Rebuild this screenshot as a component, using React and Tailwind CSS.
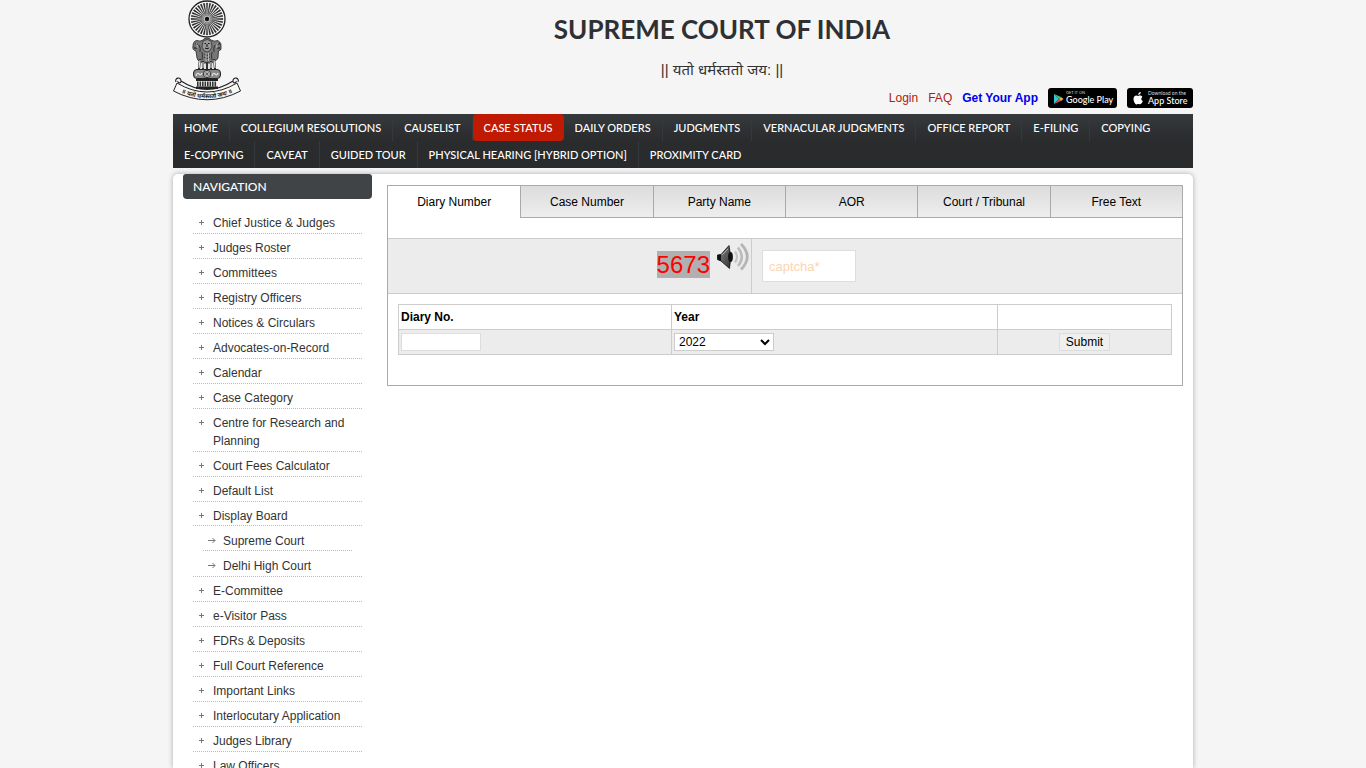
import React, { useState } from 'react';

const menuRows = [
  ['HOME', 'COLLEGIUM RESOLUTIONS', 'CAUSELIST', 'CASE STATUS', 'DAILY ORDERS', 'JUDGMENTS', 'VERNACULAR JUDGMENTS', 'OFFICE REPORT', 'E-FILING', 'COPYING'],
  ['E-COPYING', 'CAVEAT', 'GUIDED TOUR', 'PHYSICAL HEARING [HYBRID OPTION]', 'PROXIMITY CARD'],
];

const sideLinks = [
  { label: 'Chief Justice & Judges' },
  { label: 'Judges Roster' },
  { label: 'Committees' },
  { label: 'Registry Officers' },
  { label: 'Notices & Circulars' },
  { label: 'Advocates-on-Record' },
  { label: 'Calendar' },
  { label: 'Case Category' },
  { label: 'Centre for Research and Planning' },
  { label: 'Court Fees Calculator' },
  { label: 'Default List' },
  { label: 'Display Board', children: ['Supreme Court', 'Delhi High Court'] },
  { label: 'E-Committee' },
  { label: 'e-Visitor Pass' },
  { label: 'FDRs & Deposits' },
  { label: 'Full Court Reference' },
  { label: 'Important Links' },
  { label: 'Interlocutary Application' },
  { label: 'Judges Library' },
  { label: 'Law Officers' },
];

const tabs = ['Diary Number', 'Case Number', 'Party Name', 'AOR', 'Court / Tribunal', 'Free Text'];

const Emblem = () => {
  const spokes = Array.from({ length: 32 }, (_, i) => i * 11.25);

  return (
    <svg viewBox="0 0 68 101" className="w-[68px] h-[101px] shrink-0" role="img" aria-label="Emblem">
      {/* wheel */}
      <circle cx="34" cy="19" r="18" fill="#fff" stroke="#222" strokeWidth="1.300" />
      {spokes.map((deg) => (
        <path key={deg} d="M34 14.5 L33.300 3 H34.700 Z" fill="#222" stroke="#222" strokeWidth="0.4" transform={`rotate(${deg} 34 19)`} />
      ))}
      <circle cx="34" cy="19" r="4" fill="#bbb" stroke="#555" strokeWidth="0.6" />
      <circle cx="34" cy="19" r="2.2" fill="#111" />
      <path d="M32 37 h4 l1 3 h-6z" fill="#999" />

      {/* lions */}
      <path d="M30 40 Q34 35.500 38 40 Q41 42 45 40.500 Q49 43 48 47 Q49 50 45.500 51 L45 58 Q43 62 41 60 L39 63 H29 L27 60 Q25 62 24 58 L23 51 Q19 50 20 46 Q20 41 24 40.500 Q27 42 30 40Z" fill="#777" stroke="#222" strokeWidth="0.8" />
      <path d="M30 41 Q34 38 38 41 L39 47 Q37 52 34 52 Q31 52 29 47Z" fill="#999" stroke="#333" strokeWidth="0.8" />
      <path d="M31.500 43.500 h1.500 M35 43.500 h1.500 M34 44 v3 M32 48 q2 1.500 4 0 M22 43.500 l3 1 M44 44.500 l3 -1 M21 48 h3 M44 48 h3" stroke="#111" strokeWidth="1" fill="none" />
      <path d="M26 45 q2 3 1 7 M42 45 q-2 3 -1 7 M29 52 q1 4 0 8 M39 52 q-1 4 0 8 M31 54 q3 3 6 0 M31 57 q3 3 6 0" stroke="#333" strokeWidth="1" fill="none" />
      <path d="M23 43 q2 2 1 5 M45 43 q-2 2 -1 5 M33 53 v8 M35.500 53 v8" stroke="#ddd" strokeWidth="0.7" fill="none" />
      {/* legs */}
      <path d="M27 59 L26 69 M30 61 L30 69 M34 62 V69 M38 61 L38 69 M41 59 L42 69" stroke="#333" strokeWidth="2.2" />
      <path d="M27 60 L26 68 M30 62 V68 M38 62 V68 M41 60 L42 68" stroke="#eee" strokeWidth="1" />

      {/* abacus */}
      <rect x="20.500" y="69.500" width="27" height="9" rx="3.500" fill="#888" stroke="#222" strokeWidth="1" />
      <circle cx="34" cy="74" r="3.600" fill="#ddd" stroke="#222" strokeWidth="0.9" />
      <path d="M34 71 v6 M31 74 h6 M32 72 l4 4 M36 72 l-4 4" stroke="#333" strokeWidth="0.5" />
      <path d="M23 76 q1 -4 3 -2 t3 -1 M39 76 q1 -4 3 -2 t3 -1" stroke="#ddd" strokeWidth="1.300" fill="none" />

      {/* base */}
      <path d="M23 79 H45 V81 H23Z M23 86.500 H45 V89 H23Z" fill="#222" />
      <path d="M24 84 H44" stroke="#333" strokeWidth="5" strokeDasharray="1.600 0.900" />

      {/* ribbon */}
      <path d="M3 82 C1 78 8 76 8 81 C8 84 4 83 5 81 M8 81 Q34 98 60 81 M65 82 C67 78 60 76 60 81 C60 84 64 83 63 81" fill="none" stroke="#222" strokeWidth="1.100" />
      <path d="M4 83 Q34 101 64 83 L67.500 91 Q34 108.500 0.500 91 Z" fill="#f8f8f8" stroke="#222" strokeWidth="1" />
      <path id="ribbonLine" d="M3 90 Q34 106.500 65 90" fill="none" />
      <text fontSize="6" fontWeight="700" fill="#222" fontFamily="Noto Sans, sans-serif" textAnchor="middle">
        <textPath href="#ribbonLine" startOffset="50%">॥ यतो धर्मस्ततो जयः ॥</textPath>
      </text>
    </svg>
  );
};

const PlayBadge = () => (
  <svg viewBox="0 0 69 20" className="w-[69px] h-5" role="img" aria-label="Get it on Google Play">
    <rect width="69" height="20" rx="3" fill="#000" />
    <path d="M6 6 V16 L11 11Z" fill="#35c5d6" />
    <path d="M6 6 L11 11 L13 9Z" fill="#35c77a" />
    <path d="M6 16 L11 11 L13 13Z" fill="#e4405a" />
    <path d="M11 11 L13 9 L15.500 11 L13 13Z" fill="#e9b440" />
    <text x="18" y="6" fontSize="4" fill="#ccc" fontFamily="Lato, sans-serif">GET IT ON</text>
    <text x="18" y="15" fontSize="9" fontWeight="500" fill="#fff" fontFamily="Lato, sans-serif">Google Play</text>
  </svg>
);

const AppleBadge = () => (
  <svg viewBox="0 0 66 20" className="w-[66px] h-5" role="img" aria-label="Download on the App Store">
    <rect width="66" height="20" rx="3" fill="#000" />
    <path d="M13.800 4 C12.200 4.200 11.100 5.400 11.200 6.900 C12.800 6.800 13.900 5.500 13.800 4Z M11.200 8 C9.800 7.300 8.800 7.200 7.700 8 C6.200 9.200 6.200 12 7.300 14.200 C8.300 16.200 9.300 16.700 10.200 16.200 C11 15.800 11.600 15.800 12.400 16.200 C13.800 16.800 15.200 14.700 15.800 13 C14 12.200 13.700 9.900 15.400 8.900 C14.300 7.400 12.700 7.300 11.200 8Z" fill="#fff" />
    <text x="21" y="7" fontSize="5" fill="#ddd" fontFamily="Lato, sans-serif">Download on the</text>
    <text x="21" y="16" fontSize="9" fontWeight="500" fill="#fff" fontFamily="Lato, sans-serif">App Store</text>
  </svg>
);

const Speaker = () => (
  <svg viewBox="0 0 34 32" className="w-[34px] h-8">
    <defs>
      <linearGradient id="cone" x1="0" y1="0" x2="1" y2="1">
        <stop offset="0" stopColor="#888" />
        <stop offset="1" stopColor="#333" />
      </linearGradient>
    </defs>
    <path d="M1.500 12 L5 11.500 L13 2.500 Q16 14 13.500 25.500 L5 18 L1.500 16.500Z" fill="url(#cone)" stroke="#111" strokeWidth="0.8" />
    <path d="M1.500 12 L5 11.500 V18 L1.500 16.500Z" fill="#111" />
    <ellipse cx="14.500" cy="14" rx="2.400" ry="5" fill="#111" />
    <path d="M6 12 L12 6" stroke="#aaa" strokeWidth="1" />
    <path d="M19 8.500 Q23 14 19 19.500" fill="none" stroke="#c4c4c4" strokeWidth="2.200" />
    <path d="M22 4.500 Q29.500 14 22 23" fill="none" stroke="#bbb" strokeWidth="2.600" />
    <path d="M25 1 Q37.500 13.500 25 26.500" fill="none" stroke="#b4b4b4" strokeWidth="2.800" />
  </svg>
);

const PlusMark = () => (
  <svg viewBox="0 0 7 7" className="w-[7px] h-[7px] mt-[5px] shrink-0">
    <path d="M3.500 1 V6 M1 3.500 H6" stroke="#777" strokeWidth="1" />
  </svg>
);

const ArrowMark = () => (
  <svg viewBox="0 0 8 7" className="w-2 h-[7px] mt-[5px] shrink-0">
    <path d="M0 3.500 H7 M4.500 1 L7 3.500 L4.500 6" fill="none" stroke="#777" strokeWidth="1" />
  </svg>
);

const App = () => {
  const [activeTab, setActiveTab] = useState('Diary Number');
  const [diaryNo, setDiaryNo] = useState('');
  const [year, setYear] = useState('2022');
  const [captcha, setCaptcha] = useState('');

  return (
    <div className="h-screen overflow-hidden bg-[#f5f5f5] font-['Liberation_Sans',Arial,sans-serif] text-xs text-[#333]">
      <div className="max-w-[1020px] h-full mx-auto flex flex-col">
        <header className="flex gap-[10px] h-[114px] shrink-0">
          <Emblem />
          <div className="flex-1 flex flex-col">
            <h1 className="pt-3 text-center font-['Lato',sans-serif] font-bold text-[26px] leading-[34px] text-[#2f3033]">SUPREME COURT OF INDIA</h1>
            <p className="pt-[14px] text-center font-['Liberation_Sans','Noto_Sans',sans-serif] text-[15px] leading-5">|| यतो धर्मस्ततो जय: ||</p>
            <div className="flex justify-end items-center gap-[10px] pt-2">
              <a href="#login" className="text-[#b02010]">Login</a>
              <a href="#faq" className="text-[#b02010]">FAQ</a>
              <a href="#app" className="font-bold text-[#0000ee]">Get Your App</a>
              <a href="#play"><PlayBadge /></a>
              <a href="#appstore"><AppleBadge /></a>
            </div>
          </div>
        </header>

        <nav className="shrink-0 bg-[#292b2d] font-['Lato',sans-serif] text-[11px] font-medium text-white">
          {menuRows.map((row, i) => (
            <div key={row[0]} className={i === 0 ? 'flex bg-linear-to-b from-[#363a3d] to-[#292b2d]' : 'flex'}>
              {row.map((item) => (
                <a
                  key={item}
                  href="#menu"
                  className={
                    item === 'CASE STATUS'
                      ? 'px-[11px] leading-[27px] whitespace-nowrap bg-[#c01a03] rounded-sm'
                      : 'px-[11px] leading-[27px] whitespace-nowrap border-r border-[#36393b] last:border-0'
                  }
                >
                  {item}
                </a>
              ))}
            </div>
          ))}
        </nav>

        <div className="flex-1 min-h-0 mt-[6px] px-[10px] flex gap-[15px] bg-white rounded-t-[5px] shadow-[0_0_5px_#aaa]">
          <aside className="w-[189px] shrink-0">
            <h2 className="px-[10px] bg-[#414447] rounded-b-[4px] rounded-t-[3px] font-['Lato',sans-serif] text-xs leading-[25px] font-medium text-white">NAVIGATION</h2>
            <ul className="pt-[10px] px-[10px]">
              {sideLinks.map((link) => (
                <li key={link.label} className="border-b border-dotted border-[#bbb] pt-[5px] pb-px">
                  <a href="#side" className="flex gap-2 pl-[5px] leading-[18px]">
                    <PlusMark />
                    {link.label}
                  </a>
                  {link.children && (
                    <ul className="px-[10px]">
                      {link.children.map((child) => (
                        <li key={child} className="pt-[6px] border-t border-dotted border-[#bbb] first:-mx-[10px] first:px-[10px]">
                          <a href="#board" className="flex gap-[7px] pl-[5px] leading-[18px]">
                            <ArrowMark />
                            {child}
                          </a>
                        </li>
                      ))}
                    </ul>
                  )}
                </li>
              ))}
            </ul>
          </aside>

          <main className="flex-1 pt-[11px]">
            <div className="border border-[#aaa] text-black">
              <div className="grid grid-cols-6">
                {tabs.map((tab) => (
                  <button
                    key={tab}
                    type="button"
                    onClick={() => setActiveTab(tab)}
                    className={
                      tab === activeTab
                        ? 'h-8 border-l border-[#aaa] first:border-l-0 bg-white'
                        : 'h-8 border-l border-b border-[#aaa] first:border-l-0 bg-linear-to-b from-[#dcdcdc] to-[#eee]'
                    }
                  >
                    {tab}
                  </button>
                ))}
              </div>

              <form className="pt-5 pb-[30px]" onSubmit={(e) => e.preventDefault()}>
                <div className="flex h-14 border-y border-[#ccc] bg-[#ececec]">
                  <div className="w-[364px] flex justify-end items-start gap-[6px] pt-1 pr-px border-r border-[#ccc]">
                    <span className="mt-2 bg-[#b0b0b0] text-2xl leading-[27px] text-[#f00]">5673</span>
                    <button type="button" aria-label="Play captcha"><Speaker /></button>
                  </div>
                  <input
                    type="text"
                    aria-label="captcha"
                    placeholder="captcha*"
                    value={captcha}
                    onChange={(e) => setCaptcha(e.target.value)}
                    className="w-[94px] h-8 mt-[11px] ml-[10px] px-[6px] border border-[#ddd] bg-white text-[13px] placeholder:text-[#fcd5b0]"
                  />
                </div>

                <div className="px-[10px] pt-[10px]">
                  <table className="w-full table-fixed border-collapse text-left">
                    <thead>
                      <tr className="h-[25px]">
                        <th className="w-[273px] px-[2px] border border-[#ccc]"><label htmlFor="diary">Diary No.</label></th>
                        <th className="w-[326px] px-[2px] border border-[#ccc]"><label htmlFor="year">Year</label></th>
                        <th className="border border-[#ccc]"></th>
                      </tr>
                    </thead>
                    <tbody>
                      <tr className="h-[25px] bg-[#ececec]">
                        <td className="px-[2px] border border-[#ccc]">
                          <input id="diary" type="text" value={diaryNo} onChange={(e) => setDiaryNo(e.target.value)} className="block w-20 h-[18px] border border-[#ddd] bg-white px-1" />
                        </td>
                        <td className="px-[2px] border border-[#ccc]">
                          <select id="year" value={year} onChange={(e) => setYear(e.target.value)} className="block w-[100px] h-[18px] border border-[#ccc] bg-white">
                            <option>2022</option>
                            <option>2021</option>
                            <option>2020</option>
                          </select>
                        </td>
                        <td className="border border-[#ccc] text-center">
                          <button type="submit" className="block mx-auto h-[18px] px-[6px] border border-[#ddd] bg-[#efefef] leading-4">Submit</button>
                        </td>
                      </tr>
                    </tbody>
                  </table>
                </div>
              </form>
            </div>
          </main>
        </div>
      </div>
    </div>
  );
};

export default App;
